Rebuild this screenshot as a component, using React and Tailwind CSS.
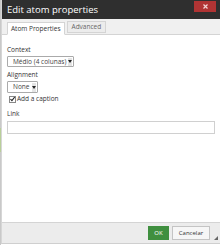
export default function App() {
  return (
    <div
      className="w-[220px] h-[245px] bg-white flex overflow-hidden"
      style={{ fontFamily: '"Open Sans", "Liberation Sans", sans-serif' }}
    >
      <div className="w-px flex flex-col bg-[#c9c9c9]">
        <div className="h-[128px]" />
        <div className="h-[24px] bg-[#b9cf9a]" />
      </div>
      <div className="flex-1 flex flex-col border-l border-[#d6d6d6] border-b border-b-[#cfcfcf] mb-[1px]">
        <div className="h-[19px] bg-[#2f2f2f] flex items-start justify-between pl-[5px] pr-[4px]">
          <span className="text-white text-[9.5px] leading-[19px] whitespace-nowrap">Edit atom properties</span>
          <button className="mt-[1px] w-[22px] h-[11px] bg-[#b03434] flex items-center justify-center">
            <svg width="5" height="5" viewBox="0 0 5 5">
              <path d="M0.5 0.5L4.5 4.5M4.5 0.5L0.5 4.5" stroke="#f3d6d6" strokeWidth="1.2" />
            </svg>
          </button>
        </div>
        <div className="h-[16px] bg-[#f0f0f0] border-b border-[#d4d4d4] flex items-end pl-[5px] gap-[2px]">
          <div className="h-[13px] -mb-px bg-white border border-[#d4d4d4] border-b-white px-[3px] text-[6.5px] leading-[11px] text-[#333] whitespace-nowrap">
            Atom Properties
          </div>
          <div className="h-[12px] bg-[#ececec] border border-[#d4d4d4] px-[4px] text-[6.5px] leading-[10px] text-[#666] mb-px whitespace-nowrap">
            Advanced
          </div>
        </div>
        <div className="flex-1 px-[5px] pt-[11px] text-[6.5px] text-[#333] whitespace-nowrap">
          <div className="leading-[8px]">Context</div>
          <div className="mt-[2px] w-[67px] h-[11px] border border-[#aaa] rounded-[1px] flex items-center justify-between pl-[5px] pr-[1px] bg-white">
            <span className="leading-[9px] text-[#444]">Médio (4 colunas)</span>
            <span className="w-[4px] h-[8px] bg-[#e4e4e4] flex items-center justify-center">
              <svg width="4" height="3" viewBox="0 0 4 3"><path d="M0 0H4L2 3Z" fill="#222" /></svg>
            </span>
          </div>
          <div className="mt-[4px] leading-[8px]">Alignment</div>
          <div className="mt-[2px] w-[31px] h-[12px] border border-[#aaa] rounded-[1px] flex items-center justify-between pl-[5px] pr-[1px] bg-white">
            <span className="leading-[10px] text-[#444]">None</span>
            <span className="w-[4px] h-[9px] bg-[#e4e4e4] flex items-center justify-center">
              <svg width="4" height="3" viewBox="0 0 4 3"><path d="M0 0H4L2 3Z" fill="#222" /></svg>
            </span>
          </div>
          <div className="mt-[2px] flex items-center gap-[1px] pl-[2px]">
            <span className="w-[7px] h-[7px] border border-[#888] bg-white flex items-center justify-center">
              <svg width="6" height="6" viewBox="0 0 6 6"><path d="M0.5 3L2.3 5L5.6 0.6" stroke="#222" strokeWidth="1.3" fill="none" /></svg>
            </span>
            <span className="leading-[8px]">Add a caption</span>
          </div>
          <div className="mt-[7px] leading-[8px]">Link</div>
          <div className="mt-[3px] w-[208px] h-[13px] border border-[#d0d0d0] bg-white" />
        </div>
        <div className="h-[21px] bg-[#ececec] border-t border-[#d4d4d4] flex items-center justify-end pr-[10px] gap-[3px] relative">
          <button className="w-[21px] h-[14px] bg-[#3f8f3f] text-white text-[6px] leading-[14px]">OK</button>
          <button className="w-[38px] h-[14px] bg-[#f6f6f6] border border-[#c4c4c4] text-[#333] text-[6px] leading-[12px]">Cancelar</button>
          <svg className="absolute right-[2px] bottom-[3px]" width="4" height="4" viewBox="0 0 4 4">
            <path d="M4 0V4H0Z" fill="#666" />
          </svg>
        </div>
      </div>
    </div>
  );
}
